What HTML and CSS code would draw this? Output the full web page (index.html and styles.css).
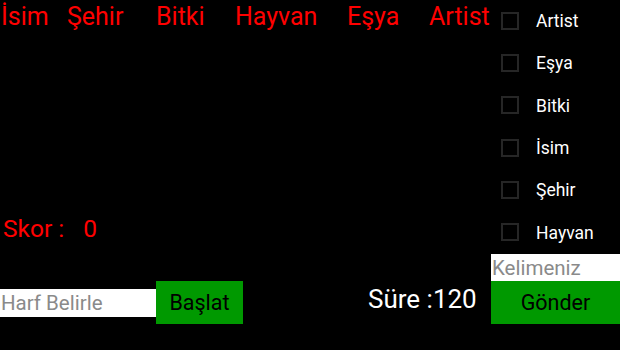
FILE: index.html
```html
<!DOCTYPE html>
<html>
<head>
    <title>Kelime Oyunu</title>
    <link rel="stylesheet" href="styles.css">
</head>
<body>
    <div class="screen">
        <div class="game">
            <div class="categories">
                <span>İsim</span>
                <span>Şehir</span>
                <span>Bitki</span>
                <span>Hayvan</span>
                <span>Eşya</span>
                <span>Artist</span>
            </div>

            <div class="score">
                <span class="score-label">Skor :</span>
                <span id="score-value">0</span>
            </div>

            <div class="controls">
                <input class="letter-input" type="text" placeholder="Harf Belirle">
                <button class="green-button start-button">Başlat</button>
                <div class="timer">Süre :<span id="timer-value">120</span></div>
            </div>
        </div>

        <div class="side">
            <div class="checklist">
                <label class="check-row"><span class="box"></span>Artist</label>
                <label class="check-row"><span class="box"></span>Eşya</label>
                <label class="check-row"><span class="box"></span>Bitki</label>
                <label class="check-row"><span class="box"></span>İsim</label>
                <label class="check-row"><span class="box"></span>Şehir</label>
                <label class="check-row"><span class="box"></span>Hayvan</label>
            </div>
            <input class="word-input" type="text" placeholder="Kelimeniz">
            <button class="green-button send-button">Gönder</button>
        </div>
    </div>
</body>
</html>
```

FILE: styles.css
```css
html, body {
    margin: 0;
    padding: 0;
    background: #000;
}
body {
    font-family: Roboto, "Noto Sans", sans-serif;
    width: 620px;
    height: 350px;
    overflow: hidden;
}
.screen {
    display: flex;
    width: 620px;
    height: 350px;
}
.game {
    width: 491px;
    display: flex;
    flex-direction: column;
}
.categories {
    display: grid;
    grid-template-columns: 66px 89px 79px 112px 82px auto;
    padding-left: 1px;
    color: #ff0000;
    font-size: 25px;
    line-height: 34px;
    white-space: nowrap;
}
.score {
    margin-top: 178px;
    padding-left: 3px;
    color: #ff0000;
    font-size: 24.5px;
    line-height: 34px;
}
.score-label {
    margin-right: 13px;
}
.controls {
    margin-top: 35px;
    display: flex;
    align-items: center;
}
.letter-input {
    width: 156px;
    height: 28px;
    box-sizing: border-box;
    border: none;
    outline: none;
    padding: 0 0 0 1px;
    background: #fff;
    font-family: Roboto, sans-serif;
    font-size: 20.5px;
}
.letter-input::placeholder,
.word-input::placeholder {
    color: #8a8a8a;
}
.green-button {
    background: #009900;
    color: #000;
    border: none;
    height: 43px;
    padding: 0;
    font-family: Roboto, sans-serif;
    font-size: 21.5px;
}
.start-button {
    width: 87px;
}
.timer {
    margin-left: 125px;
    margin-bottom: 8px;
    color: #fff;
    font-size: 26px;
    white-space: nowrap;
}
.side {
    width: 129px;
    display: flex;
    flex-direction: column;
}
.checklist {
    height: 254px;
    display: flex;
    flex-direction: column;
}
.check-row {
    flex: 1;
    display: flex;
    align-items: center;
    padding-left: 10px;
    color: #fff;
    font-size: 17.5px;
}
.box {
    width: 18px;
    height: 18px;
    box-sizing: border-box;
    border: 2px solid #262626;
    margin-right: 17px;
    margin-top: -1px;
}
.word-input {
    width: 129px;
    height: 27px;
    box-sizing: border-box;
    border: none;
    outline: none;
    padding: 0 0 0 1px;
    background: #fff;
    font-family: Roboto, sans-serif;
    font-size: 20.5px;
}
.send-button {
    width: 129px;
}
```
